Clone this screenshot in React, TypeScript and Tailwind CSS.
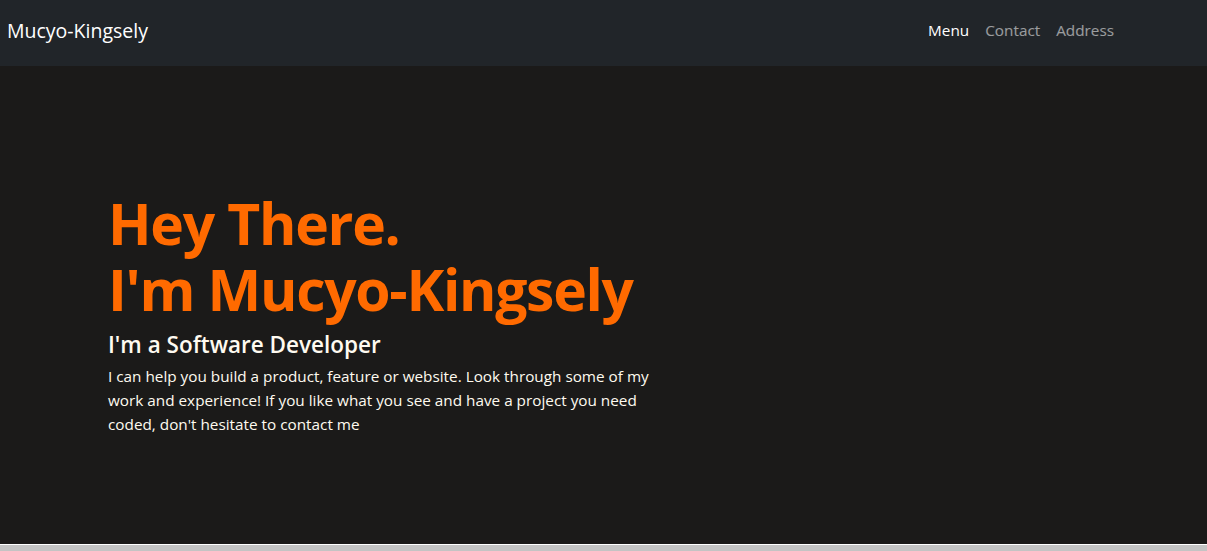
export default function App() {
  return (
    <div className="min-h-screen bg-[#c4c4c4] font-['Open_Sans',sans-serif]">
      <nav className="flex h-[66px] items-center justify-between bg-[#212529] pb-[5px] pl-[7px] pr-[93px]">
        <a className="text-[19.5px] text-white">Mucyo-Kingsely</a>
        <ul className="flex gap-4 text-[15.3px]">
          <li className="text-white">Menu</li>
          <li className="text-white/55">Contact</li>
          <li className="text-white/55">Address</li>
        </ul>
      </nav>

      <section className="h-[479px] border-b border-white bg-[#1b1a19] pl-[108px] pt-[124px]">
        <h1 className="text-[57px] font-bold leading-[66px] tracking-[-1.3px] text-[#ff6a00]">
          <span className="block">Hey There.</span>
          <span className="block">I'm Mucyo-Kingsely</span>
        </h1>
        <h2 className="mt-[6px] text-[22.5px] font-semibold text-[#fffaf0]">I'm a Software Developer</h2>
        <p className="mt-[2px] w-[560px] text-[15.3px] leading-[24px] text-[#fffaf0]">
          I can help you build a product, feature or website. Look through some of my work and
          experience! If you like what you see and have a project you need coded, don't hesitate to
          contact me
        </p>
      </section>
    </div>
  );
}
